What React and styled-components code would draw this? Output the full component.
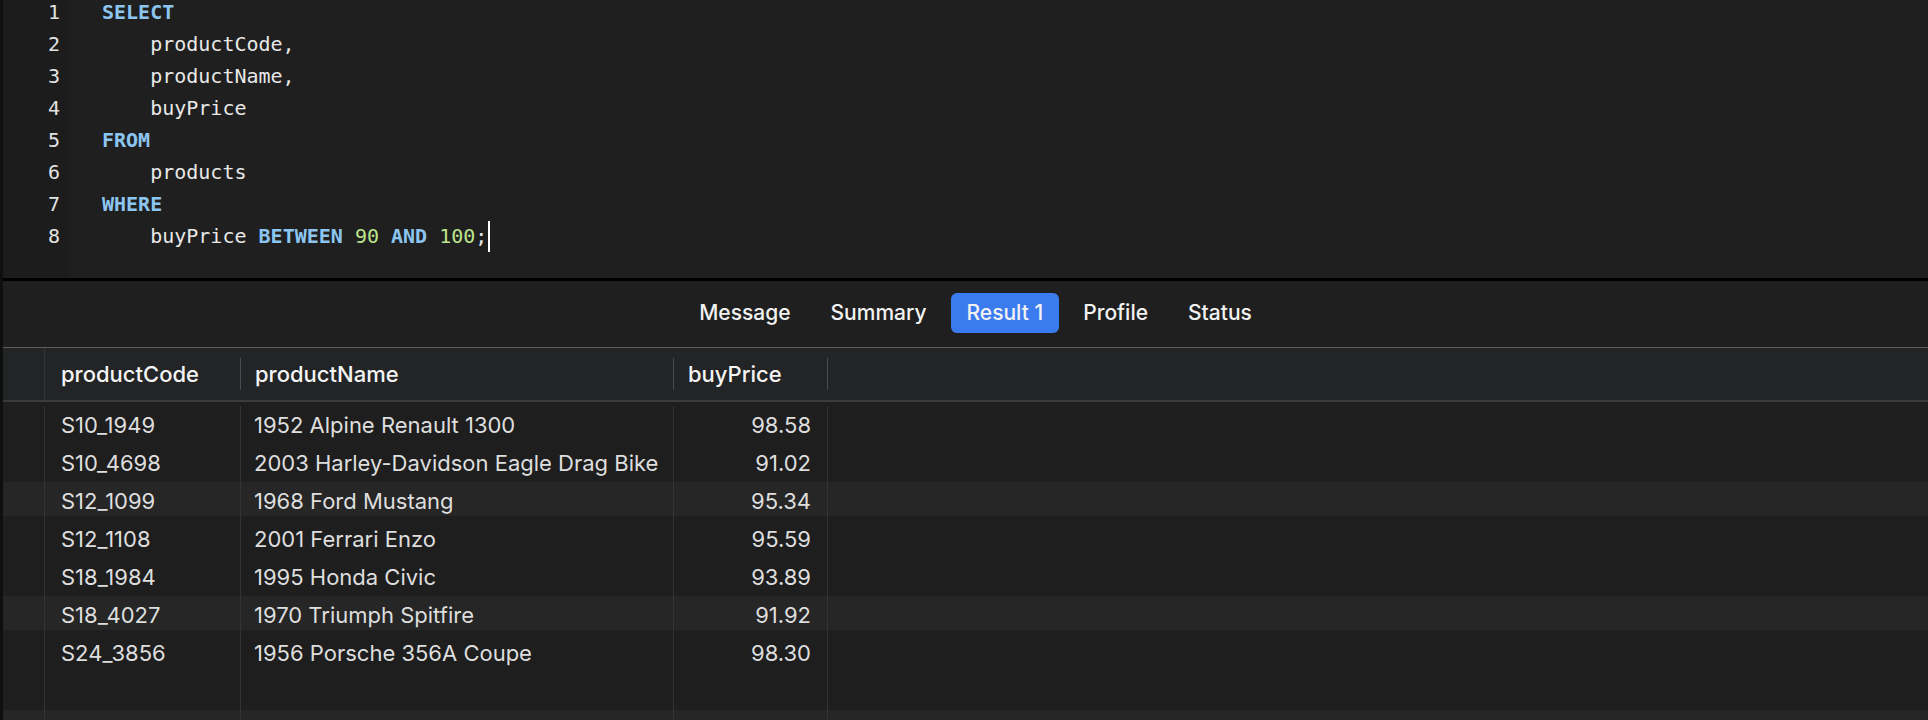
import styled, { createGlobalStyle } from "styled-components";

const GlobalStyle = createGlobalStyle`
  html, body {
    margin: 0;
    padding: 0;
    background: #1e1e1e;
  }
  * {
    box-sizing: border-box;
  }
`;

const codeLines = [
  [{ t: "SELECT", k: "kw" }],
  [{ t: "    productCode," }],
  [{ t: "    productName," }],
  [{ t: "    buyPrice" }],
  [{ t: "FROM", k: "kw" }],
  [{ t: "    products" }],
  [{ t: "WHERE", k: "kw" }],
  [
    { t: "    buyPrice " },
    { t: "BETWEEN", k: "kw" },
    { t: " " },
    { t: "90", k: "num" },
    { t: " " },
    { t: "AND", k: "kw" },
    { t: " " },
    { t: "100", k: "num" },
    { t: ";" },
  ],
];

const tabs = ["Message", "Summary", "Result 1", "Profile", "Status"];

const rows = [
  ["S10_1949", "1952 Alpine Renault 1300", "98.58"],
  ["S10_4698", "2003 Harley-Davidson Eagle Drag Bike", "91.02"],
  ["S12_1099", "1968 Ford Mustang", "95.34"],
  ["S12_1108", "2001 Ferrari Enzo", "95.59"],
  ["S18_1984", "1995 Honda Civic", "93.89"],
  ["S18_4027", "1970 Triumph Spitfire", "91.92"],
  ["S24_3856", "1956 Porsche 356A Coupe", "98.30"],
  ["", "", ""],
  ["", "", ""],
];

const App = () => {
  return (
    <>
      <GlobalStyle />
      <Window>
        <Editor>
          <Gutter>
            {codeLines.map((_, i) => (
              <LineNo key={i}>{i + 1}</LineNo>
            ))}
          </Gutter>
          <Code>
            {codeLines.map((parts, i) => (
              <CodeLine key={i}>
                {parts.map((p, j) => (
                  <Token key={j} $kind={p.k}>
                    {p.t}
                  </Token>
                ))}
                {i === codeLines.length - 1 && <Caret />}
              </CodeLine>
            ))}
          </Code>
        </Editor>

        <TabBar>
          {tabs.map((t) => (
            <Tab key={t} $active={t === "Result 1"}>
              {t}
            </Tab>
          ))}
        </TabBar>

        <Grid>
          <HeaderRow>
            <RowNumHead />
            <HeadCell $w={196}>
              productCode
              <HeadSep />
            </HeadCell>
            <HeadCell $w={433}>
              productName
              <HeadSep />
            </HeadCell>
            <HeadCell $w={154}>
              buyPrice
              <HeadSep />
            </HeadCell>
          </HeaderRow>
          <Body>
            {rows.map((r, i) => (
              <Row key={i}>
                <RowNum />
                <Cell $w={196}>{r[0]}</Cell>
                <Cell $w={433}>{r[1]}</Cell>
                <Cell $w={154} $right>
                  {r[2]}
                </Cell>
              </Row>
            ))}
          </Body>
        </Grid>
      </Window>
    </>
  );
};

export default App;

const Window = styled.div`
  width: 1928px;
  height: 720px;
  overflow: hidden;
  border-left: 3px solid #0e0f0f;
  background: #1e1e1e;
  display: flex;
  flex-direction: column;
`;

const Editor = styled.div`
  height: 281px;
  flex: none;
  display: flex;
  background: #1f1f1f;
  border-bottom: 3px solid #000;
  overflow: hidden;
`;

const Gutter = styled.div`
  width: 65px;
  background: #1c1c1c;
  padding-right: 8px;
  margin-top: -4px;
  text-align: right;
  font-family: "DejaVu Sans Mono", "Liberation Mono", monospace;
  font-size: 20px;
  color: #e2e2e2;
`;

const LineNo = styled.div`
  height: 32px;
  line-height: 32px;
`;

const Code = styled.div`
  flex: 1;
  padding-left: 34px;
  margin-top: -4px;
  font-family: "DejaVu Sans Mono", "Liberation Mono", monospace;
  font-size: 20px;
  color: #e8e8e8;
  white-space: pre;
`;

const CodeLine = styled.div`
  height: 32px;
  line-height: 32px;
  display: flex;
  align-items: center;
`;

const Token = styled.span`
  color: ${({ $kind }) =>
    $kind === "kw" ? "#8cc6f0" : $kind === "num" ? "#bde58c" : "#e8e8e8"};
  font-weight: ${({ $kind }) => ($kind === "kw" ? 700 : 400)};
`;

const Caret = styled.span`
  display: inline-block;
  width: 2px;
  height: 31px;
  background: #ffffff;
  margin-left: 1px;
`;

const TabBar = styled.div`
  height: 67px;
  flex: none;
  display: flex;
  align-items: center;
  justify-content: center;
  gap: 8px;
  padding-left: 20px;
  padding-bottom: 3px;
  background: #1f1f1f;
  border-bottom: 1px solid #5c5c5c;
`;

const Tab = styled.div`
  height: 40px;
  padding: 0 16px;
  display: flex;
  align-items: center;
  border-radius: 6px;
  font-family: Inter, "Noto Sans", sans-serif;
  font-size: 21px;
  font-weight: 500;
  color: #f2f2f2;
  background: ${({ $active }) => ($active ? "#3b7bf0" : "transparent")};
`;

const Grid = styled.div`
  flex: 1;
  display: flex;
  flex-direction: column;
  min-height: 0;
  font-family: Inter, "Noto Sans", sans-serif;
  font-size: 22px;
`;

const HeaderRow = styled.div`
  height: 54px;
  flex: none;
  display: flex;
  background: #222426;
  border-bottom: 2px solid #3a3b3c;
  color: #f4f4f4;
  font-weight: 500;
`;

const RowNumHead = styled.div`
  width: 42px;
  flex: none;
  border-right: 1px solid #333435;
`;

const HeadCell = styled.div`
  width: ${({ $w }) => $w}px;
  flex: none;
  display: flex;
  align-items: center;
  justify-content: space-between;
  padding-left: 14px;

  &:nth-child(2) {
    padding-left: 16px;
  }
`;

const HeadSep = styled.span`
  width: 1.5px;
  height: 32px;
  background: #4a4b4c;
`;

const Body = styled.div`
  flex: 1;
  padding-top: 4px;
  background: repeating-linear-gradient(
    to bottom,
    #1e1e1e 0px,
    #1e1e1e 80px,
    #262626 80px,
    #262626 114px
  );
  color: #dedede;
`;

const Row = styled.div`
  height: 38px;
  display: flex;
`;

const RowNum = styled.div`
  width: 42px;
  flex: none;
  border-right: 1px solid #333333;
`;

const Cell = styled.div`
  width: ${({ $w }) => $w}px;
  flex: none;
  display: flex;
  align-items: center;
  justify-content: ${({ $right }) => ($right ? "flex-end" : "flex-start")};
  padding: 0 16px 0 13px;
  border-right: 1px solid #333333;
  white-space: nowrap;

  &:nth-child(2) {
    padding-left: 16px;
  }
`;
